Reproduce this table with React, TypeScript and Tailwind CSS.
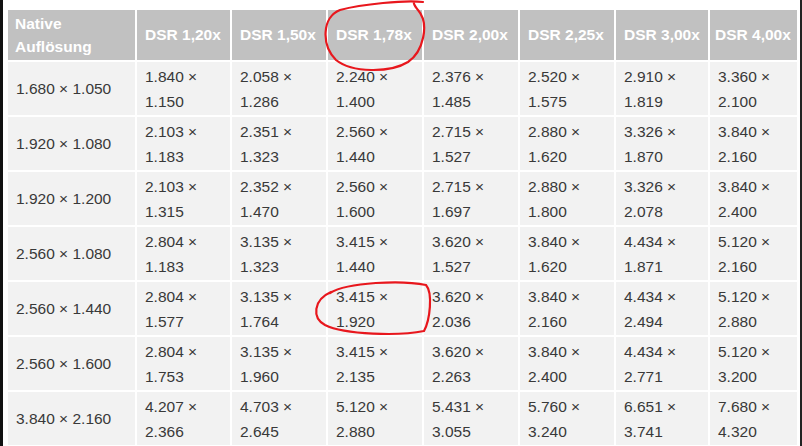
import React from "react";

const headers = ["DSR 1,20x", "DSR 1,50x", "DSR 1,78x", "DSR 2,00x", "DSR 2,25x", "DSR 3,00x", "DSR 4,00x"];

const rows: { native: string; cells: [string, string][] }[] = [
  {
    native: "1.680 × 1.050",
    cells: [["1.840", "1.150"], ["2.058", "1.286"], ["2.240", "1.400"], ["2.376", "1.485"], ["2.520", "1.575"], ["2.910", "1.819"], ["3.360", "2.100"]],
  },
  {
    native: "1.920 × 1.080",
    cells: [["2.103", "1.183"], ["2.351", "1.323"], ["2.560", "1.440"], ["2.715", "1.527"], ["2.880", "1.620"], ["3.326", "1.870"], ["3.840", "2.160"]],
  },
  {
    native: "1.920 × 1.200",
    cells: [["2.103", "1.315"], ["2.352", "1.470"], ["2.560", "1.600"], ["2.715", "1.697"], ["2.880", "1.800"], ["3.326", "2.078"], ["3.840", "2.400"]],
  },
  {
    native: "2.560 × 1.080",
    cells: [["2.804", "1.183"], ["3.135", "1.323"], ["3.415", "1.440"], ["3.620", "1.527"], ["3.840", "1.620"], ["4.434", "1.871"], ["5.120", "2.160"]],
  },
  {
    native: "2.560 × 1.440",
    cells: [["2.804", "1.577"], ["3.135", "1.764"], ["3.415", "1.920"], ["3.620", "2.036"], ["3.840", "2.160"], ["4.434", "2.494"], ["5.120", "2.880"]],
  },
  {
    native: "2.560 × 1.600",
    cells: [["2.804", "1.753"], ["3.135", "1.960"], ["3.415", "2.135"], ["3.620", "2.263"], ["3.840", "2.400"], ["4.434", "2.771"], ["5.120", "3.200"]],
  },
  {
    native: "3.840 × 2.160",
    cells: [["4.207", "2.366"], ["4.703", "2.645"], ["5.120", "2.880"], ["5.431", "3.055"], ["5.760", "3.240"], ["6.651", "3.741"], ["7.680", "4.320"]],
  },
];

const App: React.FC = () => {
  return (
    <div className="relative flex h-[446px] w-[802px] overflow-hidden bg-white font-['Liberation_Sans',Arial,sans-serif]">
      <div className="w-[3px] shrink-0 bg-[#111]" />
      <div className="flex-1 pl-[5px] pt-[10px]">
        <div className="grid grid-cols-[127px_93px_94px_94px_94px_94px_92px_87px] grid-rows-[50px] auto-rows-[53px] gap-[2px] text-[15.5px]">
          <div className="flex items-center bg-[#c1c1c1] px-[7px] font-bold leading-[23px] text-white">
            Native
            <br />
            Auflösung
          </div>
          {headers.map((h, i) => (
            <div
              key={h}
              className={`flex items-center whitespace-nowrap bg-[#c1c1c1] font-bold text-white ${
                i === headers.length - 1 ? "px-[5px]" : "px-[8px]"
              }`}
            >
              {h}
            </div>
          ))}
          {rows.map((r) => (
            <React.Fragment key={r.native}>
              <div className="flex items-center bg-[#f2f2f2] px-[8px] text-[#393939]">{r.native}</div>
              {r.cells.map(([a, b], i) => (
                <div key={i} className="flex flex-col justify-center bg-[#f2f2f2] px-[8px] leading-[25px] text-[#393939]">
                  <span>{a} ×</span>
                  <span>{b}</span>
                </div>
              ))}
            </React.Fragment>
          ))}
        </div>
      </div>
      <div className="w-[2px] shrink-0 bg-[#222]" />
      <svg className="pointer-events-none absolute left-0 top-0" width="802" height="446" fill="none">
        <path
          d="M 423 2 C 405 0, 362 4, 340 10 C 322 17, 321 45, 336 60 C 352 73, 390 73, 408 62 C 423 52, 430 24, 418 10 C 415 6, 413 4, 414 2"
          stroke="#e8171d"
          strokeWidth="2.2"
          strokeLinecap="round"
        />
        <path
          d="M 330 293 C 348 282, 402 280, 426 285 C 433 293, 430 320, 424 331 C 400 336, 345 335, 325 325 C 312 318, 313 300, 331 292"
          stroke="#e8171d"
          strokeWidth="2.2"
          strokeLinecap="round"
        />
      </svg>
    </div>
  );
};

export default App;
